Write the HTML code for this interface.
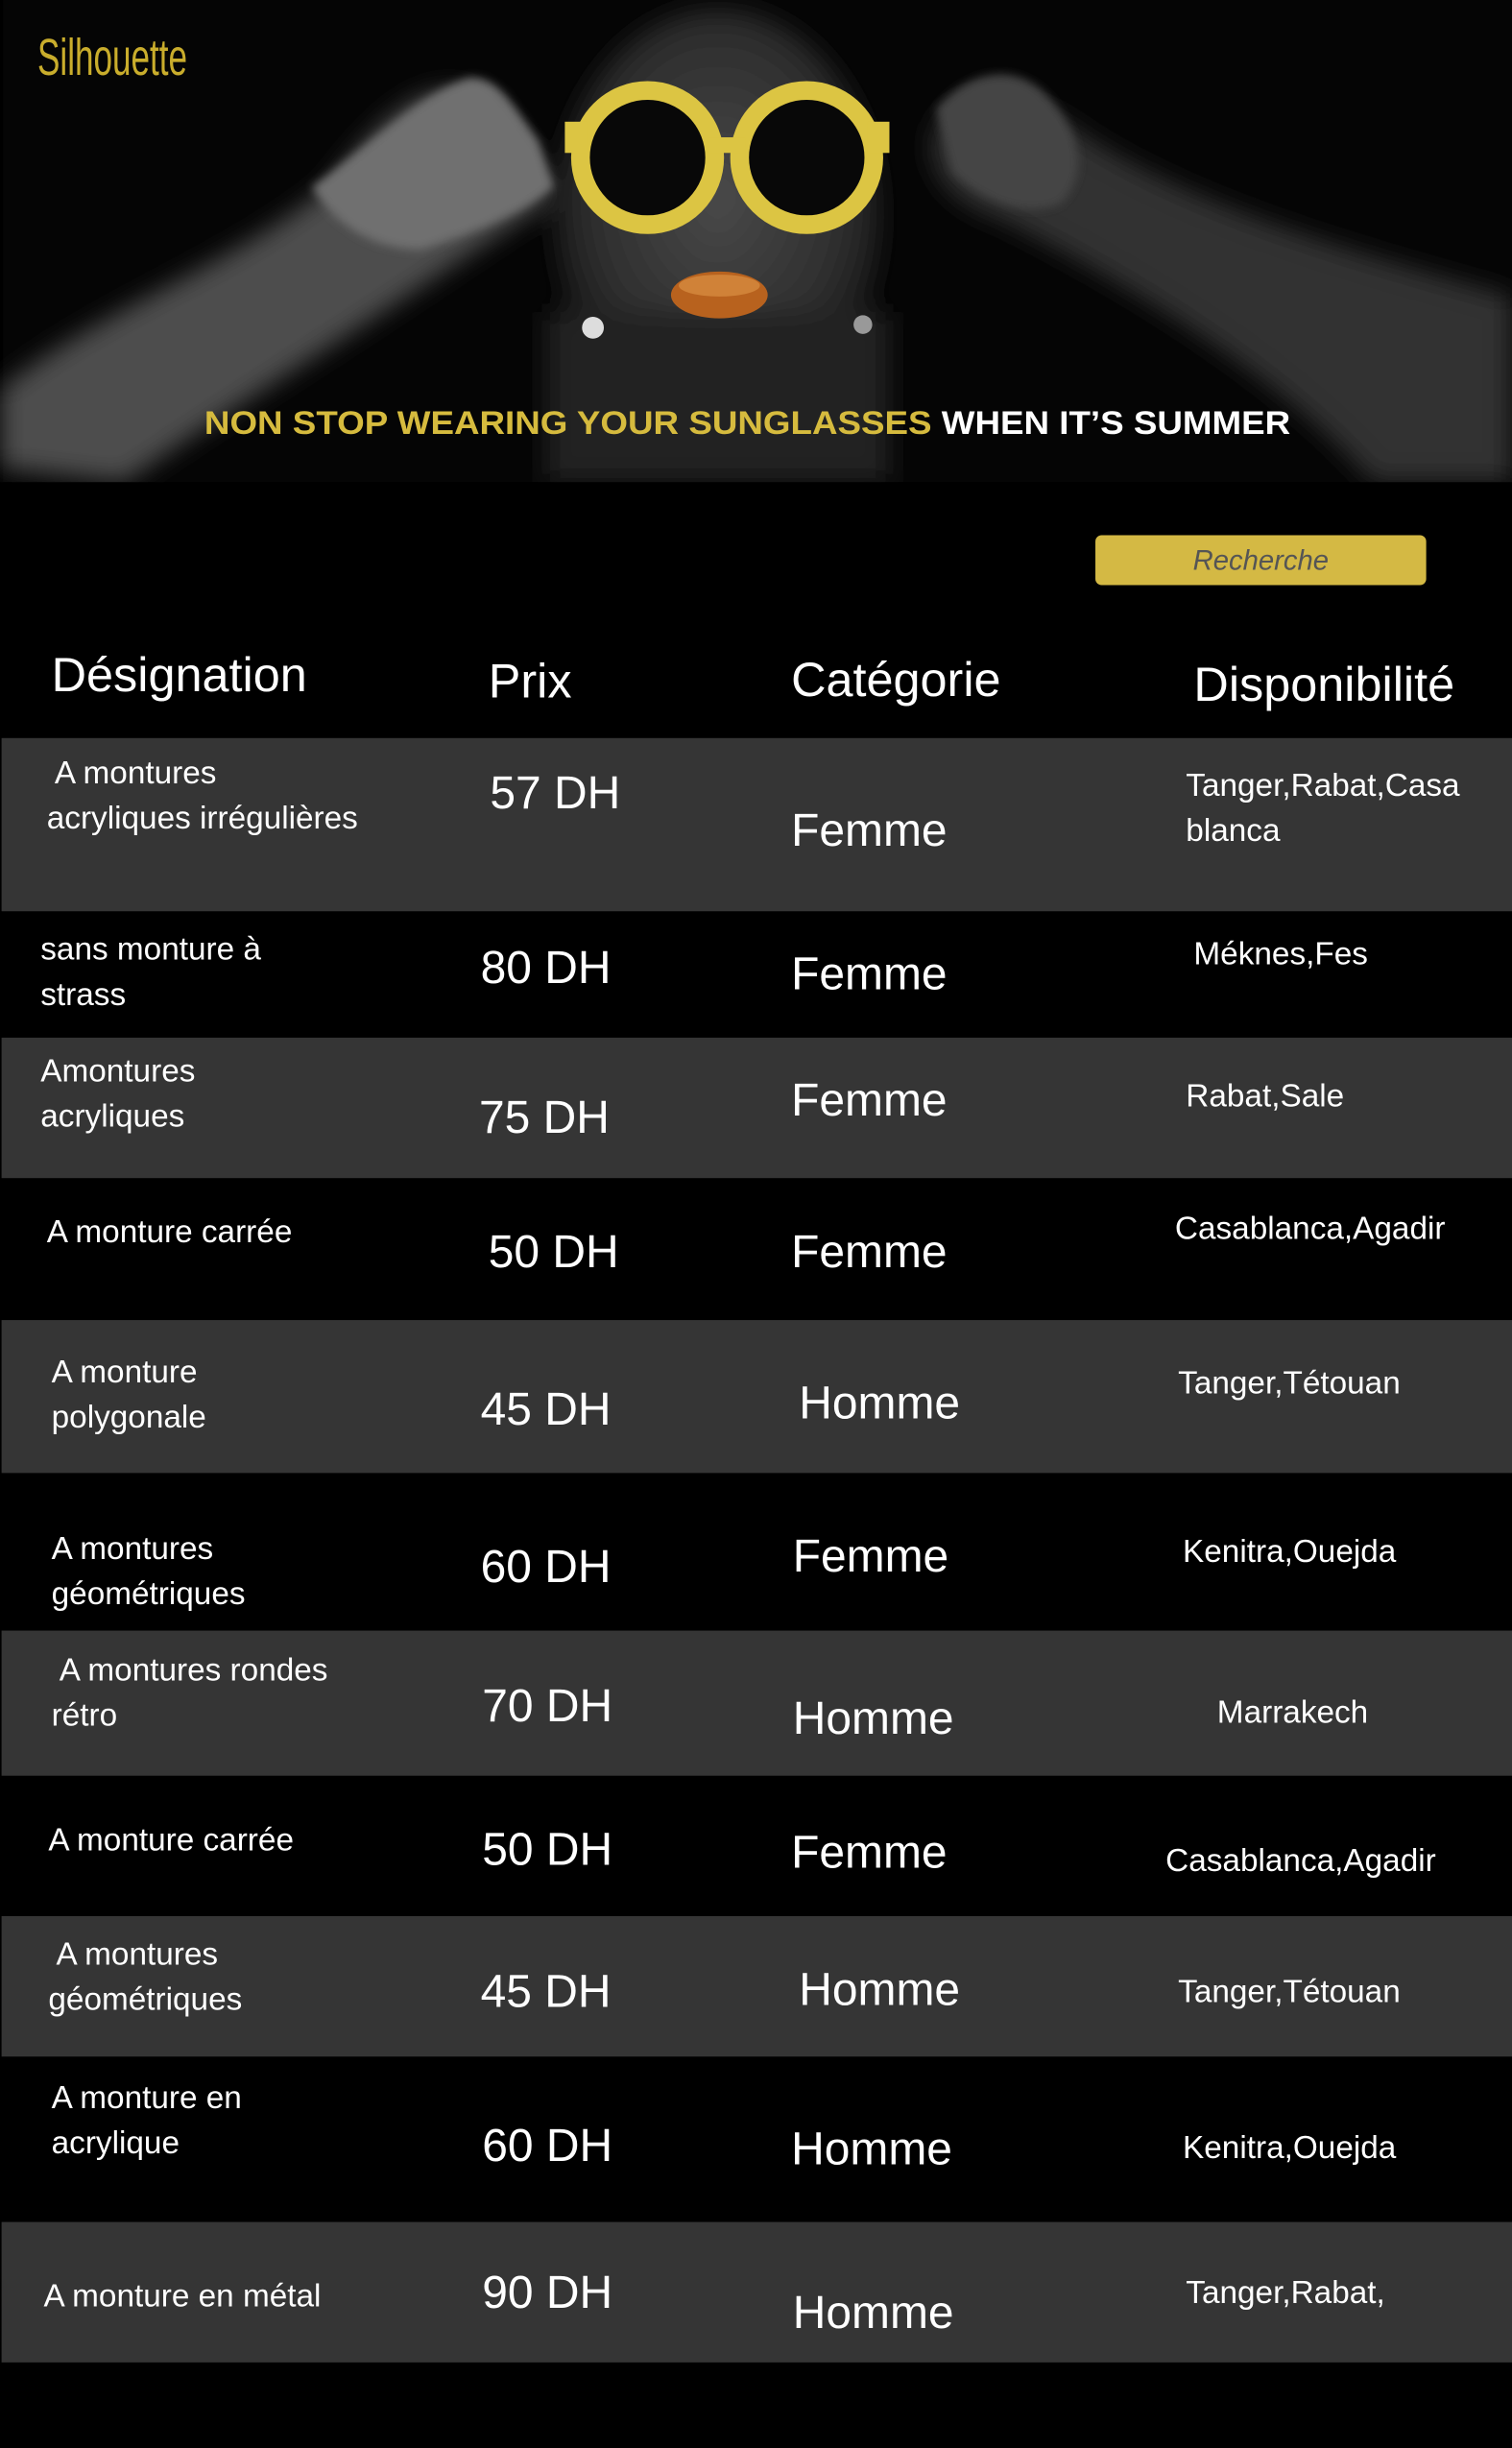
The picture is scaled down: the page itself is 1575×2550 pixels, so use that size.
<!DOCTYPE html>
<html><head><meta charset="utf-8"><style>
html,body{margin:0;padding:0;background:#000;width:1575px;height:2549px;overflow:hidden}
#w{position:absolute;left:0;top:0;width:969px;height:1569px;transform:scale(1.6254);transform-origin:0 0;font-family:"Liberation Sans",sans-serif;color:#fff}
.r{position:absolute;left:1px;width:968px;background:#353535}
.t{position:absolute;white-space:nowrap;line-height:1}
.d{font-size:20.5px;line-height:29px}
.p{font-size:29.5px}
.c{font-size:29.5px}
.h{font-size:31px}
</style></head><body><div id="w">
<svg width="969" height="309" style="position:absolute;left:0;top:0" viewBox="0 0 969 309">
<defs>
<filter id="b" x="-20%" y="-20%" width="140%" height="140%"><feGaussianBlur stdDeviation="8"/></filter>
<filter id="b2"><feGaussianBlur stdDeviation="3"/></filter>
<radialGradient id="face" cx="0.5" cy="0.45" r="0.55"><stop offset="0" stop-color="#4a4a4a"/><stop offset="0.7" stop-color="#2e2e2e"/><stop offset="1" stop-color="#141414"/></radialGradient>
</defs>
<rect x="2" y="0" width="967" height="309" fill="#050505"/>
<g filter="url(#b)">
<path d="M0 300 L0 250 C60 200 150 170 210 120 C240 80 270 50 300 60 C330 80 350 110 350 130 C320 150 290 170 260 190 C200 230 120 280 80 309 Z" fill="#4e4e4e"/>
<path d="M969 309 L969 190 C900 170 780 140 700 90 C660 60 620 50 600 80 C590 110 610 130 640 140 C720 180 820 240 880 309 Z" fill="#333"/>
<ellipse cx="460" cy="140" rx="105" ry="135" fill="url(#face)"/>
<rect x="350" y="200" width="220" height="109" fill="#222"/>
</g>
<g filter="url(#b2)">
<path d="M200 120 C240 90 270 60 300 50 C320 48 330 70 345 90 L355 120 C330 140 300 150 270 160 C240 160 215 145 200 120Z" fill="#707070"/>
<path d="M600 70 C620 45 650 40 670 60 C690 80 700 110 680 130 C660 140 630 130 610 110Z" fill="#444"/>
</g>
<circle cx="415" cy="101" r="43" fill="#080808" stroke="#dcc543" stroke-width="12"/>
<circle cx="517" cy="101" r="43" fill="#080808" stroke="#dcc543" stroke-width="12"/>
<rect x="454" y="88" width="24" height="10" fill="#dcc543"/>
<rect x="362" y="78" width="14" height="20" fill="#dcc543"/>
<rect x="556" y="78" width="14" height="20" fill="#dcc543"/>
<ellipse cx="461" cy="189" rx="31" ry="15" fill="#b8621e"/>
<ellipse cx="461" cy="183" rx="26" ry="7" fill="#d08238"/>
<circle cx="380" cy="210" r="7" fill="#ddd"/>
<circle cx="553" cy="208" r="6" fill="#999"/>
<text x="24" y="48" fill="#c9ad2c" font-family="Liberation Sans Narrow, Liberation Sans, sans-serif" font-size="33" font-weight="300" textLength="96" lengthAdjust="spacingAndGlyphs">Silhouette</text>
<text x="131" y="278" font-family="Liberation Sans, sans-serif" font-weight="bold" font-size="21" textLength="696" lengthAdjust="spacingAndGlyphs"><tspan fill="#d6bb3e">NON STOP WEARING YOUR SUNGLASSES </tspan><tspan fill="#fff">WHEN IT’S SUMMER</tspan></text>
</svg>
<div style="position:absolute;left:702px;top:343px;width:212px;height:32px;background:#d4b944;border-radius:4px;color:#555;font-style:italic;font-size:18px;line-height:32px;text-align:center">Recherche</div>

<div class="t h" style="left:33px;top:417px">Désignation</div>
<div class="t h" style="left:313px;top:421px">Prix</div>
<div class="t h" style="left:507px;top:420px">Catégorie</div>
<div class="t h" style="left:765px;top:423px">Disponibilité</div>

<div class="r" style="top:473px;height:111px"></div>
<div class="r" style="top:665px;height:90px"></div>
<div class="r" style="top:846px;height:98px"></div>
<div class="r" style="top:1045px;height:93px"></div>
<div class="r" style="top:1228px;height:90px"></div>
<div class="r" style="top:1424px;height:90px"></div>

<div class="t d" style="left:35px;top:481px">A montures</div>
<div class="t d" style="left:30px;top:510px">acryliques irrégulières</div>
<div class="t p" style="left:314px;top:494px">57 DH</div>
<div class="t c" style="left:507px;top:518px">Femme</div>
<div class="t d" style="left:760px;top:489px">Tanger,Rabat,Casa<br>blanca</div>

<div class="t d" style="left:26px;top:594px">sans monture à<br>strass</div>
<div class="t p" style="left:308px;top:606px">80 DH</div>
<div class="t c" style="left:507px;top:610px">Femme</div>
<div class="t d" style="left:765px;top:597px">Méknes,Fes</div>

<div class="t d" style="left:26px;top:672px">Amontures<br>acryliques</div>
<div class="t p" style="left:307px;top:702px">75 DH</div>
<div class="t c" style="left:507px;top:691px">Femme</div>
<div class="t d" style="left:760px;top:688px">Rabat,Sale</div>

<div class="t d" style="left:30px;top:775px">A monture carrée</div>
<div class="t p" style="left:313px;top:788px">50 DH</div>
<div class="t c" style="left:507px;top:788px">Femme</div>
<div class="t d" style="left:753px;top:773px">Casablanca,Agadir</div>

<div class="t d" style="left:33px;top:865px">A monture<br>polygonale</div>
<div class="t p" style="left:308px;top:889px">45 DH</div>
<div class="t c" style="left:512px;top:885px">Homme</div>
<div class="t d" style="left:755px;top:872px">Tanger,Tétouan</div>

<div class="t d" style="left:33px;top:978px">A montures<br>géométriques</div>
<div class="t p" style="left:308px;top:990px">60 DH</div>
<div class="t c" style="left:508px;top:983px">Femme</div>
<div class="t d" style="left:758px;top:980px">Kenitra,Ouejda</div>

<div class="t d" style="left:38px;top:1056px">A montures rondes</div>
<div class="t d" style="left:33px;top:1085px">rétro</div>
<div class="t p" style="left:309px;top:1079px">70 DH</div>
<div class="t c" style="left:508px;top:1087px">Homme</div>
<div class="t d" style="left:780px;top:1083px">Marrakech</div>

<div class="t d" style="left:31px;top:1165px">A monture carrée</div>
<div class="t p" style="left:309px;top:1171px">50 DH</div>
<div class="t c" style="left:507px;top:1173px">Femme</div>
<div class="t d" style="left:747px;top:1178px">Casablanca,Agadir</div>

<div class="t d" style="left:36px;top:1238px">A montures</div>
<div class="t d" style="left:31px;top:1267px">géométriques</div>
<div class="t p" style="left:308px;top:1262px">45 DH</div>
<div class="t c" style="left:512px;top:1261px">Homme</div>
<div class="t d" style="left:755px;top:1262px">Tanger,Tétouan</div>

<div class="t d" style="left:33px;top:1330px">A monture en<br>acrylique</div>
<div class="t p" style="left:309px;top:1361px">60 DH</div>
<div class="t c" style="left:507px;top:1363px">Homme</div>
<div class="t d" style="left:758px;top:1362px">Kenitra,Ouejda</div>

<div class="t d" style="left:28px;top:1457px">A monture en métal</div>
<div class="t p" style="left:309px;top:1455px">90 DH</div>
<div class="t c" style="left:508px;top:1468px">Homme</div>
<div class="t d" style="left:760px;top:1455px">Tanger,Rabat,</div>
</div></body></html>
